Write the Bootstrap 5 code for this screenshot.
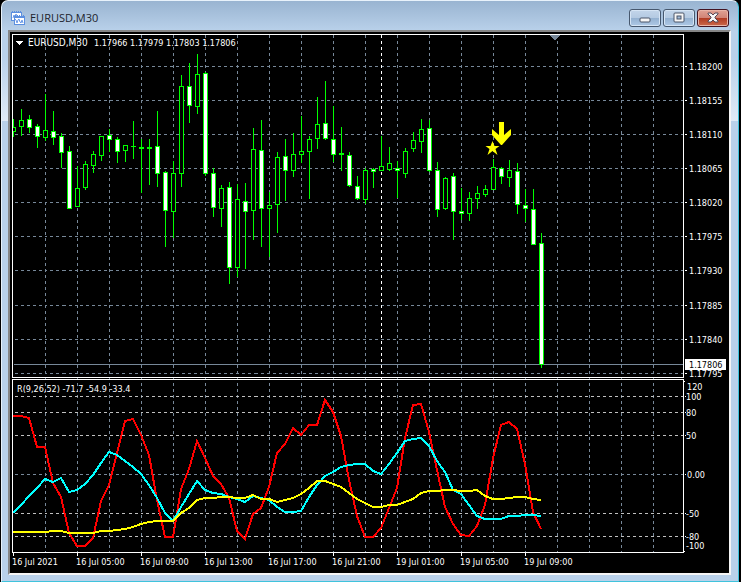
<!DOCTYPE html>
<html lang="en">
<head>
<meta charset="utf-8">
<meta name="viewport" content="width=device-width, initial-scale=1">
<title>EURUSD,M30</title>
<link rel="stylesheet" href="https://cdn.jsdelivr.net/npm/bootstrap@5.3.0/dist/css/bootstrap.min.css">
<style>
body{background:#000;font-family:"DejaVu Sans Condensed","DejaVu Sans",sans-serif}
.win{background:linear-gradient(#99b4d1 0,#b9d1ea 30px,#b9d1ea 56px,#e0eaf6 120px,#b9d1ea 120px);border:1px solid #3fc3dc;border-left-color:#e8f2fb;border-top-color:#e8f2fb;border-radius:7px 7px 0 0;margin:0 2px 0 1px;padding:0 7px 6px 6px}
.titlebar{height:29px;padding:7px 2px 2px 3px}
.caption{font:11px/20px "Open Sans",sans-serif;color:#1c232c}
.titlebar .btn{width:32px;height:18px;border:1px solid #47586e;border-radius:3px;background:linear-gradient(#c3d5ea 0,#b4cae2 48%,#93b0d0 50%,#afc9e6 100%);box-shadow:inset 0 0 0 1px #d6e5f5}
.titlebar .btn.shut{border-color:#431422;background:linear-gradient(#e0a295 0,#d18476 48%,#b03a22 50%,#cb6a4c 100%);box-shadow:inset 0 0 0 1px #e9b5a8}
.client{border:2px solid;border-color:#868686 #f5f5f5 #f5f5f5 #868686;background:#000}
.client text{font-size:9px;fill:#fff}
.client .symbol{font-size:10px}
.client .bid{fill:#000}
</style>
<script src="https://cdn.jsdelivr.net/npm/bootstrap@5.3.0/dist/js/bootstrap.bundle.min.js"></script>
</head>
<body>
<main class="win d-flex flex-column min-vh-100">
  <header class="titlebar d-flex align-items-center">
    <svg width="15" height="15" viewBox="0 0 15 15" aria-hidden="true">
      <path d="M0 1h1V0h1v1h1V0h1v1h1V0h1v1h1V0h1v1h1V0h1v1h1v9H0z" fill="#5b8fe0"/>
      <path d="M1 2h9v7H1z" fill="#fff"/>
      <path d="M2 7l1-3 1 2 1-3 1 2" fill="none" stroke="#6c9be8"/>
      <path d="M3 5h1V4h1v1h1V4h1v1h1V4h1v1h1V4h1v1h1V4h1v1h1v9H3z" fill="#5b8fe0"/>
      <path d="M4 7h9v6H4z" fill="#fff"/>
      <path d="M4 8l1 1 1 3 1-3 1-1 1 3 1 1 1-3 1 3" fill="none" stroke="#6c9be8"/>
    </svg>
    <h1 class="caption m-0 ms-1">EURUSD,M30</h1>
    <div class="d-flex ms-auto" style="gap:2px">
      <button type="button" class="btn p-0 d-flex align-items-center justify-content-center" aria-label="Minimize"><svg width="12" height="12" viewBox="0 0 12 12"><rect x="1" y="6" width="10" height="4" rx="1" fill="#f6f6f6" stroke="#4a5568"/></svg></button>
      <button type="button" class="btn p-0 d-flex align-items-center justify-content-center" aria-label="Maximize"><svg width="12" height="12" viewBox="0 0 12 12"><rect x="1" y="1" width="10" height="9" rx="1" fill="#f6f6f6" stroke="#4a5568"/><rect x="4" y="4" width="4" height="3" fill="#9fb9d6" stroke="#4a5568"/></svg></button>
      <button type="button" class="btn shut p-0 d-flex align-items-center justify-content-center" aria-label="Close"><svg width="12" height="12" viewBox="0 0 12 12"><path d="M1 1h3l2 2 2-2h3v1L8 5v1l3 3v1H8L6 8l-2 2H1V9l3-3V5L1 2z" fill="#f8f8f8" stroke="#564a58"/></svg></button>
    </div>
  </header>
  <section class="client flex-grow-1" aria-label="EURUSD M30 chart">
    <svg id="chart" class="d-block w-100 h-auto" viewBox="10 32 719 541" role="img" aria-label="Candlestick chart with oscillator"></svg>
  </section>
</main>
<script>
// one entry per bar: high, body top, body bottom, low, 1 = falling bar
const bars=[[119,127,132,137,0],[109,120,127,136,0],[115,119,128,133,1],[124,126,137,148,1],[94,130,138,141,0],[111,131,138,145,1],[133,136,153,168,1],[146,151,209,209,1],[166,188,207,207,0],[161,164,188,190,0],[151,154,166,173,0],[136,136,156,161,0],[129,135,140,152,1],[137,139,152,163,1],[145,145,151,162,0],[121,146,147,159,0],[139,147,149,193,0],[139,147,149,185,0],[111,146,174,187,1],[171,172,211,247,1],[161,173,212,238,0],[75,86,174,187,0],[63,86,106,123,1],[54,74,107,114,0],[72,73,174,176,1],[168,173,208,217,1],[185,188,209,227,0],[182,187,268,284,1],[184,199,268,277,0],[183,201,212,269,1],[128,149,211,240,0],[120,150,209,247,1],[192,205,209,257,0],[152,157,205,233,0],[139,156,171,201,1],[133,154,171,177,0],[116,151,155,163,0],[136,139,152,199,0],[97,124,139,149,0],[81,123,139,140,1],[106,139,155,162,1],[127,153,155,171,0],[152,155,186,187,1],[176,186,199,200,1],[168,170,200,204,0],[168,169,172,188,1],[136,166,171,171,0],[147,163,170,171,0],[161,168,171,198,1],[148,151,174,178,0],[132,140,149,152,0],[119,129,142,153,0],[120,128,171,172,1],[162,170,210,217,1],[177,178,209,210,0],[173,176,212,240,1],[188,211,214,220,1],[192,198,214,221,0],[186,193,199,209,0],[185,189,195,197,0],[159,167,190,190,0],[167,168,177,184,1],[160,170,178,187,0],[163,171,205,214,1],[189,205,209,222,1],[189,209,245,245,1],[233,243,365,368,1]];
// oscillator values, one y per bar
const red=[416,416,418,447,447,483,497,533,546,546,538,501,485,453,421,419,435,455,500,537,537,489,469,441,458,476,484,498,531,539,514,508,487,453,444,428,435,425,425,400,412,436,480,516,537,537,528,508,488,438,405,404,432,470,507,524,535,536,526,505,458,425,422,429,464,512,529];
const cyan=[513,505,496,488,479,482,478,492,490,484,475,463,452,455,461,467,474,485,498,513,521,507,494,481,490,493,494,497,499,502,496,498,500,507,512,512,511,497,485,476,472,467,465,464,464,471,474,464,453,441,439,438,446,461,472,490,494,505,516,519,519,519,516,516,515,515,516];
const yellow=[532,532,532,532,532,531,531,533,533,533,533,531,531,530,529,527,524,522,521,521,521,513,508,500,498,498,497,497,498,498,495,499,499,502,500,498,494,488,481,481,484,487,493,499,503,507,507,505,505,502,499,493,491,491,490,490,491,491,490,496,499,499,498,497,497,499,500];
const rect=(x,y,w,h,f)=>`<rect x="${x}" y="${y}" width="${w}" height="${h}" fill="${f}"/>`;
const path=(d,c,w,dash)=>`<path d="${d}" fill="none" stroke="${c}" stroke-width="${w}"${dash?` stroke-dasharray="${dash}"`:''}/>`;
const label=(x,y,t,c)=>`<text x="${x}" y="${y}"${c?` class="${c}"`:''}>${t}</text>`;
const slate='#778899',lime='#00ff00';
let g='',t='';
const prices=[[66,'1.18200'],[100,'1.18155'],[134,'1.18110'],[168,'1.18065'],[202,'1.18020'],[236,'1.17975'],[270,'1.17930'],[305,'1.17885'],[339,'1.17840'],[373,'1.17795']];
const levels=[[396,'100'],[412,'80'],[435,'50'],[474,'0.00'],[513,'-50'],[536,'-80']];
g+='<g transform="translate(.5 .5)">';
for(let x=45;x<683;x+=32)g+=path(`M${x} 34V552`,slate,1,'3 3');
prices.forEach(([y,s])=>{g+=path(`M14 ${y}H683`,slate,1,'3 3')+path(`M684 ${y}H686`,'#fff',1);t+=label(689,y+4,s)});
levels.forEach(([y,s])=>{g+=path(`M14 ${y}H683`,y===474?slate:'#c0c0c0',1,'3 3')+path(`M684 ${y}H685`,'#fff',1);t+=label(s==='0.00'?687:686,y+4,s)});
g+=path('M381 34V552','#fff',1,'3 3')+path('M13 364H683',slate,1);
g+='</g>';
bars.forEach(([hi,a,b,lo,down],i)=>{
  const x=13+8*i,l=Math.max(x-2,13),w=x+3-l;
  g+=rect(x,hi,1,lo-hi,lime)+rect(l,a,w,b-a,lime);
  if(b-a>2)g+=rect(l===13?13:x-1,a+1,l===13?2:3,b-a-2,down?'#fff':'#000');
});
[[red,'#ff0000'],[cyan,'#00ffff'],[yellow,'#ffff00']].forEach(([v,c])=>g+=path('M'+v.map((y,i)=>`${13+8*i} ${y}`).join('L'),c,2));
g+=rect(12,34,672,1,'#fff')+rect(12,377,672,1,'#fff')+rect(12,379,672,1,'#fff')+rect(12,552,672,1,'#fff')+rect(12,34,1,344,'#fff')+rect(683,34,1,344,'#fff')+rect(12,379,1,174,'#fff')+rect(683,379,1,174,'#fff');
g+=rect(684,381,1,1,'#fff')+rect(684,551,1,1,'#fff');
['16 Jul 2021','16 Jul 05:00','16 Jul 09:00','16 Jul 13:00','16 Jul 17:00','16 Jul 21:00','19 Jul 01:00','19 Jul 05:00','19 Jul 09:00'].forEach((s,i)=>{g+=rect(13+64*i,553,1,3,'#fff');t+=label(12+64*i,565,s)});
g+='<path d="M549 35h11l-5 5h-1z" fill="#778899"/><path d="M16 41h7l-3 4h-1z" fill="#fff"/>';
t+=label(687,390,'120')+label(686,549,'-100')+label(28,46,'EURUSD,M30','symbol')+label(94,46,'1.17966 1.17979 1.17803 1.17806')+label(17,392,'R(9,26,52) -71.7 -54.9 -33.4');
t+=rect(685,359,41,11,'#fff')+label(689,368,'1.17806','bid');
const marks='<path d="M499 122h5v13l7-6v6l-9 10h-1l-9-10v-6l7 6z" fill="#ff0"/><path d="M492.500 141l2 5h5l-4 3 2 6-5-4-5 4 2-6-4-3h5z" fill="#ff0"/>';
document.getElementById('chart').innerHTML=`<g shape-rendering="crispEdges">${g}</g>${marks}${t}`;
</script>
</body>
</html>
